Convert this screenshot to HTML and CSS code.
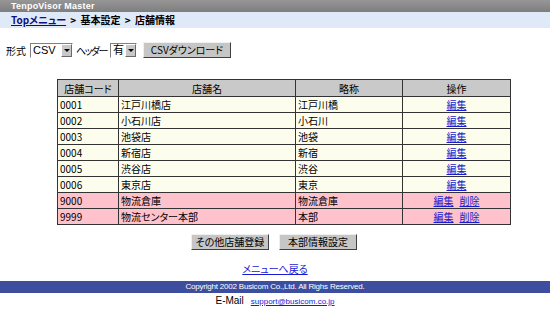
FILE: index.html
```html
<!DOCTYPE html>
<html>
<head>
  <meta charset="UTF-8">
  <link rel="stylesheet" href="styles.css">
</head>
<body>
  <div class="title-bar">TenpoVisor Master</div>
  <div class="crumbs">
    <a href="#">Topメニュー</a> &gt; 基本設定 &gt; 店舗情報
  </div>

  <form class="csv-form">
    <span class="label">形式</span>
    <span class="select wide"><select><option>CSV</option></select><span class="arrow"></span></span>
    <span class="label tight">ヘッダー</span>
    <span class="select"><select><option>有</option></select><span class="arrow"></span></span>
    <button type="button" class="btn csv-btn">CSVダウンロード</button>
  </form>

  <table class="shops">
    <tr>
      <th class="c-code">店舗コード</th>
      <th class="c-name">店舗名</th>
      <th class="c-short">略称</th>
      <th class="c-op">操作</th>
    </tr>
    <tr><td>0001</td><td>江戸川橋店</td><td>江戸川橋</td><td class="op"><a href="#">編集</a></td></tr>
    <tr><td>0002</td><td>小石川店</td><td>小石川</td><td class="op"><a href="#">編集</a></td></tr>
    <tr><td>0003</td><td>池袋店</td><td>池袋</td><td class="op"><a href="#">編集</a></td></tr>
    <tr><td>0004</td><td>新宿店</td><td>新宿</td><td class="op"><a href="#">編集</a></td></tr>
    <tr><td>0005</td><td>渋谷店</td><td>渋谷</td><td class="op"><a href="#">編集</a></td></tr>
    <tr><td>0006</td><td>東京店</td><td>東京</td><td class="op"><a href="#">編集</a></td></tr>
    <tr class="hq"><td>9000</td><td>物流倉庫</td><td>物流倉庫</td><td class="op"><a href="#">編集</a><a href="#">削除</a></td></tr>
    <tr class="hq"><td>9999</td><td>物流センター本部</td><td>本部</td><td class="op"><a href="#">編集</a><a href="#">削除</a></td></tr>
  </table>

  <div class="actions">
    <button type="button" class="btn">その他店舗登録</button>
    <button type="button" class="btn">本部情報設定</button>
  </div>

  <div class="back"><a href="#">メニューへ戻る</a></div>

  <div class="footer">Copyright 2002 Busicom Co.,Ltd. All Righs Reserved.</div>
  <div class="mail">E-Mail<a href="#">support@busicom.co.jp</a></div>
</body>
</html>
```

FILE: styles.css
```css
body {
  margin: 0;
  width: 550px;
  height: 317px;
  overflow: hidden;
  font-family: "Noto Sans CJK JP", "Liberation Sans", sans-serif;
  font-size: 10px;
  font-feature-settings: "palt";
  color: #000;
  background-color: #fff;
  background-image: radial-gradient(#ededed 0.6px, transparent 0.7px);
  background-size: 2px 2px;
}

a {
  color: #1a1ad0;
}

.title-bar {
  height: 12px;
  line-height: 12px;
  padding-left: 11px;
  background: linear-gradient(#969696, #7e7e7e);
  color: #fff;
  font-family: "Liberation Sans", sans-serif;
  font-size: 9px;
  font-weight: bold;
  letter-spacing: 0.2px;
}

.crumbs {
  height: 16px;
  line-height: 16px;
  padding-left: 11px;
  background: #dfe9f7;
  font-weight: bold;
  word-spacing: 2px;
}

.crumbs a {
  color: #101080;
}

.csv-form {
  display: flex;
  align-items: center;
  height: 16px;
  margin: 14px 0 0 6px;
}

.label {
  margin-right: 4px;
}

.label.tight {
  letter-spacing: -1.5px;
  margin-right: 3px;
}

.select {
  display: inline-flex;
  height: 15px;
  box-sizing: border-box;
  border: 1px solid;
  border-color: #808080 #fff #fff #808080;
  background: #fff;
  margin-right: 5px;
}

.select.wide {
  margin-right: 3px;
}

.select select {
  appearance: none;
  border: none;
  outline: none;
  padding: 0 0 0 2px;
  margin: 0;
  background: transparent;
  font-family: "Liberation Sans", "Noto Sans CJK JP", sans-serif;
  font-size: 11px;
  line-height: 13px;
  height: 13px;
  width: 14px;
}

.select.wide select {
  width: 30px;
}

.arrow {
  width: 11px;
  height: 13px;
  box-sizing: border-box;
  background: #c8c8c8;
  border: 1px solid;
  border-color: #fff #6a6a6a #6a6a6a #fff;
  display: flex;
  align-items: center;
  justify-content: center;
}

.arrow::before {
  content: "";
  border-left: 3px solid transparent;
  border-right: 3px solid transparent;
  border-top: 3px solid #000;
}

.btn {
  height: 16px;
  padding: 0;
  border: 1px solid;
  border-color: #f0f0f0 #404040 #404040 #f0f0f0;
  background: #c6c6c6;
  font-family: "Noto Sans CJK JP", sans-serif;
  font-feature-settings: "palt";
  font-size: 10px;
  line-height: 14px;
  color: #000;
  width: 78px;
}

.csv-btn {
  width: 88px;
  margin-left: 1px;
}

.shops {
  margin: 21px 0 0 57px;
  border-collapse: collapse;
  border: 1px solid #333;
}

.shops th,
.shops td {
  border: 1px solid #333;
  height: 15px;
  padding: 0 2px;
  line-height: 15px;
  font-weight: normal;
  white-space: nowrap;
}

.shops th {
  background: #c9c9c9;
  text-align: center;
  height: 16px;
}

.shops td {
  background: #fdfdee;
}

.shops .hq td {
  background: #fdc2cc;
}

.c-code { width: 56px; }
.c-name { width: 172px; }
.c-short { width: 102px; }
.c-op { width: 103px; }

.shops td.op {
  text-align: center;
}

.shops td.op a + a {
  margin-left: 6px;
}

.actions {
  display: flex;
  justify-content: center;
  gap: 10px;
  margin: 9px 0 0 -2px;
}

.back {
  text-align: center;
  margin-top: 12px;
  line-height: 14px;
}

.footer {
  margin-top: 5px;
  height: 12px;
  line-height: 12px;
  background: #3d4e9f;
  color: #fff;
  text-align: center;
  font-family: "Liberation Sans", sans-serif;
  font-size: 8px;
  letter-spacing: -0.2px;
}

.mail {
  text-align: center;
  line-height: 16px;
  font-family: "Liberation Sans", sans-serif;
  font-size: 10px;
}

.mail a {
  margin-left: 7px;
  font-size: 8px;
}
```
